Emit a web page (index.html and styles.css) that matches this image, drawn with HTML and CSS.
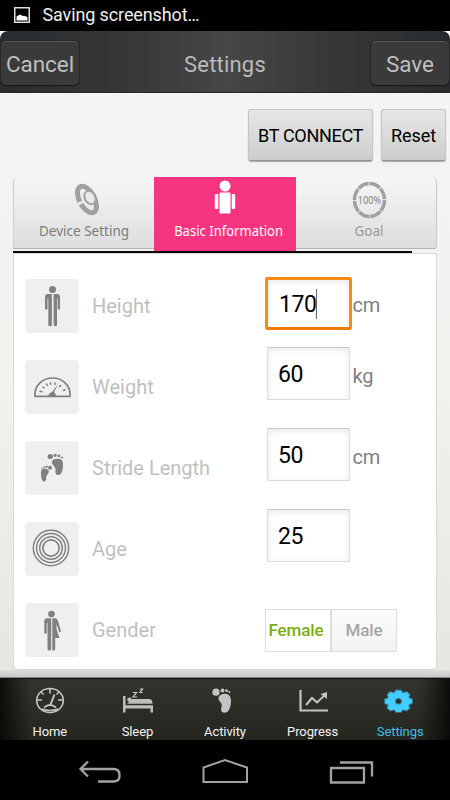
FILE: index.html
```html
<!DOCTYPE html>
<html lang="en">
<head>
<meta charset="utf-8">
<title>Settings</title>
<link rel="stylesheet" href="styles.css">
</head>
<body>
<div class="screen">
  <div class="status">
    <svg class="status-icon" width="16" height="16" viewBox="0 0 16 16"><rect x=".75" y=".75" width="14.5" height="14.5" fill="none" stroke="#ddd" stroke-width="1.5"/><path d="M2.500 13.500V9.500L5 8l1.500-.5 2 1.500 1.500-.3 3.500 1.300v3.500z" fill="#fff"/></svg>
    <span>Saving screenshot…</span>
  </div>
  <header class="header-wrap">
    <div class="header">
      <button class="hbtn">Cancel</button>
      <h1 class="title">Settings</h1>
      <button class="hbtn">Save</button>
    </div>
  </header>
  <main class="main">
    <div class="actions">
      <button class="btn btn-connect">BT CONNECT</button>
      <button class="btn btn-reset">Reset</button>
    </div>
    <nav class="tabs">
      <div class="tab tab-first">
        <svg width="30" height="38" viewBox="0 0 30 38"><ellipse cx="18" cy="18.500" rx="7.500" ry="14.500" transform="rotate(-28 18 18.500)" fill="none" stroke="#a0a0a0" stroke-width="5"/><ellipse cx="21" cy="16.500" rx="6.300" ry="8" transform="rotate(-28 21 16.500)" fill="#a0a0a0"/><ellipse cx="21" cy="16.500" rx="4.200" ry="6.200" transform="rotate(-28 21 16.500)" fill="#ebebeb"/><path d="M7 24l7.500-3.500" stroke="#e9e9e9" stroke-width="2.500"/></svg>
        <span class="tab-label">Device Setting</span>
      </div>
      <div class="tab tab-active">
        <svg width="22" height="38" viewBox="0 0 22 38" fill="#fff"><circle cx="11" cy="9" r="5.500"/><rect x="5.500" y="15.500" width="11" height="21" rx="1"/><rect x=".8" y="17" width="3.500" height="15" rx="1"/><rect x="17.700" y="17" width="3.500" height="15" rx="1"/></svg>
        <span class="tab-label">Basic Information</span>
      </div>
      <div class="tab tab-last">
        <svg width="36" height="38" viewBox="0 0 36 38"><ellipse cx="18.500" cy="19" rx="15" ry="16.500" pathLength="80" fill="none" stroke="#a0a0a0" stroke-width="3.500" stroke-dasharray="9.300 .7"/><text x="18.500" y="22.500" text-anchor="middle" textLength="23.500" lengthAdjust="spacingAndGlyphs" class="pct">100%</text></svg>
        <span class="tab-label">Goal</span>
      </div>
    </nav>
    <div class="rule"></div>
    <section class="panel">
      <div class="row">
        <div class="tile"><svg width="54" height="54" viewBox="0 0 54 54" fill="#808080"><circle cx="27.500" cy="10.500" r="3.500"/><path d="M23 15h9q3 0 3 3v12.500h-2.300V19.500H32V46q0 1.300-1.700 1.300-1.700 0-1.700-1.300V15h-1.700v31q0 1.300-1.900 1.300-1.700 0-1.700-1.300V19.500h-.8v11H20V18q0-3 3-3z"/></svg></div>
        <label class="label">Height</label>
        <div class="field field-focus">170<i class="caret"></i></div><span class="unit">cm</span>
      </div>
      <div class="row">
        <div class="tile"><svg width="54" height="54" viewBox="0 0 54 54"><path d="M10 36.300v-2C10 25 18 18 27.500 18S45 25 45 34.300v2z" fill="none" stroke="#808080" stroke-width="1.700"/><path d="M14.500 31l3 1M17.500 26.700l2 1.800M21.500 23.500l1 2.500M25.500 22.300v2.500M30 22.300l-.3 2.500M36 25l-1.700 2M40.500 29.500l-2.700 1.200" stroke="#808080" stroke-width="1.500"/><path d="M33.500 24l-4.500 8q2 2 2 4h-8q1-3 4-4z" fill="#808080"/></svg></div>
        <label class="label">Weight</label>
        <div class="field">60</div><span class="unit">kg</span>
      </div>
      <div class="row">
        <div class="tile"><svg width="54" height="54" viewBox="0 0 54 54" fill="#808080"><path d="M26.800 20.500c1-2.500 5-3 8-2.500 3.500.8 3.500 5 3 9-.5 4.500-2.200 7-4.500 7-3 0-3-2.500-2.700-5 .5-3-3.800-5-3.800-8.500z"/><ellipse cx="25.300" cy="15.500" rx="2.700" ry="2.600"/><circle cx="30.200" cy="14.300" r="1.600"/><circle cx="34" cy="14.900" r="1.300"/><circle cx="37" cy="16.500" r="1"/><path d="M16 31c0-3 3-3.500 5.500-3 2.500.5 3 2.500 1.800 4.300-1 1.600-2.400 2.700-2.200 4.500.2 2-.2 3.700-2 3.700C16.500 40.500 16 35 16 31z"/><circle cx="25" cy="26.700" r="2"/><circle cx="21.500" cy="25.800" r="1.200"/><circle cx="18.800" cy="26.500" r=".9"/><circle cx="16.800" cy="27.800" r=".7"/></svg></div>
        <label class="label">Stride Length</label>
        <div class="field">50</div><span class="unit">cm</span>
      </div>
      <div class="row">
        <div class="tile"><svg width="54" height="54" viewBox="0 0 54 54" fill="none" stroke="#808080" stroke-width="1.400"><circle cx="26" cy="26" r="17.700"/><circle cx="26" cy="26" r="14.500"/><circle cx="26" cy="26" r="11.300"/><circle cx="26" cy="26" r="8.100" stroke-width="1.700"/></svg></div>
        <label class="label">Age</label>
        <div class="field">25</div>
      </div>
      <div class="row">
        <div class="tile"><svg width="54" height="54" viewBox="0 0 54 54" fill="#808080"><circle cx="26.500" cy="11" r="3.300"/><path d="M22.500 15.300h3.700V46q0 1.500-1.800 1.500-1.900 0-1.900-1.500V20h-.8v10.500h-2.400V18q0-2.700 3.200-2.700zM27.300 15.300h3q1.800 0 2.500 2L36 28.500l-1.600 1-2.900-8.500v5l3 9h-4.300v11q0 1.500-1.500 1.500t-1.400-1.500z"/></svg></div>
        <label class="label">Gender</label>
        <div class="segment"><span class="seg seg-on">Female</span><span class="seg seg-off">Male</span></div>
      </div>
    </section>
  </main>
  <div class="ledge"></div>
  <nav class="tabbar">
    <div class="item"><svg width="36" height="30" viewBox="0 0 36 30" fill="none" stroke="#c4c4c4"><ellipse cx="18" cy="14.500" rx="13.300" ry="12" stroke-width="1.600"/><path d="M18 2.500v5M5 14h5M26 14h5M9 6l2.500 2.500M27 6L24.500 8.500" stroke-width="1.500"/><path d="M22.500 8.500l-4 10" stroke-width="2"/><path d="M12 21.500q6-5 12 0M10 23q8 3 16 0" stroke-width="1.700"/></svg><span>Home</span></div>
    <div class="item"><svg width="36" height="30" viewBox="0 0 36 30"><g fill="#bdbdbd"><path d="M4 10h2.500v9.300H34V26.500h-2.500v-4h-25v4H4z"/><circle cx="10.500" cy="13.700" r="2.300"/><path d="M8 17.800q4-3 5-4.800h17q3.500 0 3.500 4.800z"/></g><path d="M14 6.500h3.500l-3.500 4.500H18M21 3.200h2.500L21 6.500h2.700" fill="none" stroke="#c8c8c8" stroke-width="1.200"/></svg><span>Sleep</span></div>
    <div class="item"><svg width="36" height="30" viewBox="0 0 36 30" fill="#c4c4c4"><circle cx="9" cy="6.200" r="3.600"/><circle cx="15.500" cy="4.500" r="1.900"/><circle cx="19.500" cy="4.700" r="1.400"/><circle cx="22.300" cy="6" r="1"/><path d="M11.500 11.500c1-3.500 5-4.500 8.500-3.500 4.500 1.500 4.500 7 3.500 11.500-1 4.500-2.500 7.200-6 7.200-3.800 0-3.800-3.500-2.800-6.700 1-3.500-4-4.500-3.200-8.500z"/></svg><span>Activity</span></div>
    <div class="item"><svg width="36" height="30" viewBox="0 0 36 30" fill="none" stroke="#c4c4c4"><path d="M5.500 4v20.500H33" stroke-width="2.200"/><path d="M11 19l6-7 5 4.500 8-7.500" stroke-width="2"/><path d="M25.500 8l6.500-2v7z" fill="#c4c4c4" stroke="none"/></svg><span>Progress</span></div>
    <div class="item item-on"><svg width="36" height="30" viewBox="0 0 36 30"><path fill="#43cdff" fill-rule="evenodd" stroke="#43cdff" stroke-opacity=".4" stroke-width="2" stroke-linejoin="round" d="M14 4.500h5l1 2 1.500.6 3-1 3 2.400-1 2.500.7 1.400 2.800.9v4l-2.800.9-.7 1.400 1 2.500-3 2.400-3-1-1.500.6-1 2h-5l-1-2-1.500-.6-3 1-3-2.400 1-2.500-.7-1.400-2.800-.9v-4l2.800-.9.7-1.400-1-2.500 3-2.400 3 1 1.500-.6zM16.500 12.100a3.500 3.200 0 1 0 .01 0z"/></svg><span>Settings</span></div>
  </nav>
  <div class="navbar">
    <svg width="450" height="60" viewBox="0 0 450 60" fill="none" stroke="#a2a2a2" stroke-width="2.300"><path d="M81 29h32.500q6 0 6 6v1q0 5.500-6 5.500H98M88 21.500L80.500 29l7.500 7.500"/><path d="M203.500 42V27.500L225 20l22 7.500V42z" stroke-width="2"/><path d="M331 28h33v14.500h-33zM340 22.500h32v14"/></svg>
  </div>
</div>
</body>
</html>
```
FILE: styles.css
```css
* { box-sizing: border-box; }
body { margin: 0; background: #000; font-family: Roboto, "Liberation Sans", sans-serif; }
button { font-family: inherit; padding: 0; margin: 0; border: 0; }
svg { display: block; flex: none; }
.screen { width: 450px; height: 800px; display: flex; flex-direction: column; overflow: hidden; }

.status { height: 31px; flex: none; display: flex; align-items: center; padding: 0 0 2px 14px; gap: 12.5px; background: #000; color: #eee; font-size: 18px; letter-spacing: -.12px; }
.header-wrap { height: 62px; flex: none; background: #fff; }
.header { height: 62px; display: flex; align-items: center; justify-content: space-between; padding: 2px 1px 0; border-radius: 8px 8px 0 0; background: linear-gradient(90deg, #292c2e 0%, #353739 28%, #464646 50%, #353739 75%, #292c2e 100%); border-bottom: 1px solid #29292a; }
.hbtn { width: 78px; height: 44px; padding-top: 2px; border-radius: 5px; background: #3a3a3a; border-top: 1px solid #555; box-shadow: 0 1px 1px #161616, 0 0 1px 1px #282828; color: #bfbfbf; font-size: 22.500px; letter-spacing: -.05px; }
.title { margin: 0; padding-top: 4px; font-size: 22px; font-weight: 400; color: #bbb; letter-spacing: .2px; }

.main { height: 577px; flex: none; padding: 16px 13px 0; background: linear-gradient(#f5f4f3, #f1f1ee 50%, #e6e7e1); }
.actions { display: flex; justify-content: flex-end; gap: 8px; margin-right: -9px; }
.btn { height: 52px; padding-top: 1px; border: 1px solid #c4c4c4; border-bottom-color: #929292; border-radius: 3px; background: linear-gradient(#e7e7e7, #cdcdcd); box-shadow: 0 1px 1px #aaa; color: #000; font-size: 18px; }
.btn-connect { width: 125px; letter-spacing: -.3px; }
.btn-reset { width: 65px; letter-spacing: -.1px; }

.tabs { display: flex; height: 74px; margin-top: 16px; align-items: flex-start; }
.tab { width: 141px; height: 72px; display: flex; flex-direction: column; align-items: center; padding-top: 4px; background: linear-gradient(#f6f6f6, #dedede); color: #7c7c7c; font-family: "Noto Sans", sans-serif; font-size: 15px; border-bottom: 1px solid #b3b3b3; white-space: nowrap; }
.tab-label { line-height: 20px; margin-top: 1px; transform: scaleX(.9); }
.tab-first { border-radius: 5px 0 0 0; border-left: 1px solid #ccc; }
.tab-active { width: 142px; height: 74px; padding-top: 0; background: #f7347f; border: 0; color: #fff; }
.tab-active .tab-label { margin: 5px 0 0 7px; transform: scaleX(.87); }
.tab-last { border-radius: 0 5px 3px 0; border-right: 1px solid #c8c8c8; color: #999; padding-left: 5px; }
.tab-last .tab-label { padding-left: 2px; }
.pct { font: 11.500px "Noto Sans", sans-serif; fill: #858585; }
.rule { width: 399px; height: 2px; background: #090909; }
.panel { height: 417px; padding: 25px 11px 0; background: #fff; border: 1px solid #d8d8d6; border-radius: 0 0 5px 5px; }

.row { display: grid; grid-template-columns: 67px 173px 87px 1fr; height: 81px; align-items: start; }
.tile { width: 54px; height: 54px; border-radius: 4px; background: #efefef; }
.label { line-height: 55px; color: #bfbfbf; font-size: 20px; white-space: nowrap; letter-spacing: 0; }
.field { width: 83px; height: 53px; margin: -13px 0 0 2px; padding: 2px 0 0 10px; border: 1px solid #dcdcdc; border-top-color: #ccc; background: #fff; box-shadow: inset 0 2px 6px #e8e8e8; font-size: 23px; letter-spacing: -.4px; line-height: 50px; color: #000; display: flex; align-items: center; }
.field-focus { width: 87px; margin: -2px 0 0; padding-left: 11px; border: 3px solid #f98b14; border-bottom-color: #f17a05; border-radius: 3px; }
.caret { width: 1px; height: 30px; margin: -2px 0 0 -1px; background: #666; }
.unit { color: #808080; font-size: 20px; line-height: 50px; margin-top: -9px; padding-left: .5px; letter-spacing: -.25px; }
.field-focus + .unit { margin-top: 1px; }
.segment { display: flex; margin-top: 6px; width: 132px; height: 43px; }
.seg { width: 66px; flex: none; height: 43px; line-height: 40px; text-align: center; border: 1px solid #ddd; font-size: 17px; font-weight: 500; letter-spacing: -.1px; }
.seg-on { color: #7cac10; background: #fff; padding-right: 4px; }
.seg-off { color: #a6a6a6; background: linear-gradient(#fcfcfc, #f2f2f2); }

.ledge { height: 8px; flex: none; background: linear-gradient(#dcdcdc, #c9c9c9 85%, #555); }
.tabbar { height: 62px; flex: none; display: flex; padding: 7px 6px 0; border-top: 1px solid #111; background: linear-gradient(90deg, rgba(0,0,0,.75), transparent 7%, transparent 93%, rgba(0,0,0,.75)), linear-gradient(#34342f, #25251f); }
.item { flex: 1; display: flex; flex-direction: column; align-items: center; color: #f2f2f2; font-size: 13px; line-height: 18px; letter-spacing: -.1px; }
.item span { margin-top: 7px; }
.item-on { color: #43bce8; }
.navbar { height: 60px; flex: none; background: #000; }
```
